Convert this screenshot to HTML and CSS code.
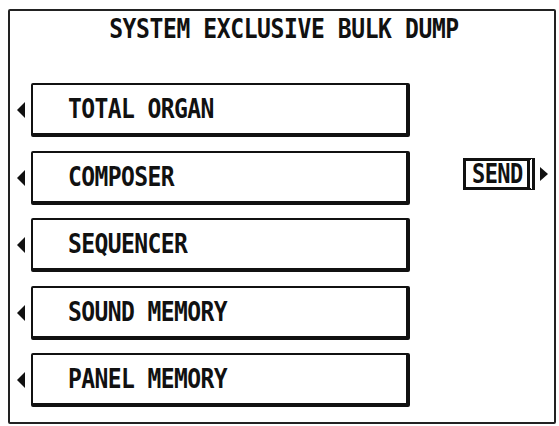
FILE: index.html
```html
<!DOCTYPE html>
<html lang="en">
<head>
  <meta charset="UTF-8" />
  <title>System Exclusive Bulk Dump</title>
  <link rel="stylesheet" href="styles.css">
</head>
<body>
  <div class="screen">
    <h1 class="title"><span class="tall">SYSTEM EXCLUSIVE BULK DUMP</span></h1>

    <div class="main">
      <!-- dump targets -->
      <ul class="items">
        <li class="item"><span class="arrow-left"></span><div class="btn"><span class="tall">TOTAL ORGAN</span></div></li>
        <li class="item"><span class="arrow-left"></span><div class="btn"><span class="tall">COMPOSER</span></div></li>
        <li class="item"><span class="arrow-left"></span><div class="btn"><span class="tall">SEQUENCER</span></div></li>
        <li class="item"><span class="arrow-left"></span><div class="btn"><span class="tall">SOUND MEMORY</span></div></li>
        <li class="item"><span class="arrow-left"></span><div class="btn"><span class="tall">PANEL MEMORY</span></div></li>
      </ul>

      <!-- send -->
      <div class="send-col">
        <div class="send"><span class="tall">SEND</span></div>
        <span class="arrow-right"></span>
      </div>
    </div>
  </div>
</body>
</html>
```

FILE: styles.css
```css
body {
  margin: 0;
  background: #fff;
  color: #111;
  font-family: "DejaVu Sans Mono", monospace;
  font-weight: bold;
}
.screen {
  margin: 9px 3px 0 8px;
  width: 544px;
  height: 411px;
  border: 2px solid #222;
  border-radius: 2px;
}
.tall {
  display: inline-block;
  transform: scaleY(1.18);
}
.title {
  margin: 6px 0 0 0;
  font-size: 23px;
  line-height: 24px;
  font-weight: bold;
  letter-spacing: -0.4px;
  text-align: center;
  padding-left: 4px;
}
.main {
  display: flex;
  margin-top: 42px;
}
.items {
  list-style: none;
  margin: 0;
  padding: 0 0 0 7px;
  display: flex;
  flex-direction: column;
  gap: 13.5px;
}
.item {
  display: flex;
  align-items: center;
  gap: 6px;
}
.arrow-left {
  flex-shrink: 0;
  width: 0;
  height: 0;
  border-top: 8px solid transparent;
  border-bottom: 8px solid transparent;
  border-right: 8px solid #111;
}
.btn {
  width: 338px;
  height: 48px;
  padding-left: 35px;
  border-top: 2px solid #111;
  border-left: 2px solid #111;
  border-right: 4px solid #111;
  border-bottom: 4px solid #111;
  border-radius: 2px;
  display: flex;
  align-items: center;
  font-size: 23px;
  letter-spacing: -0.6px;
}
.send-col {
  display: flex;
  align-items: center;
  gap: 5px;
  margin: 75px 0 0 53px;
  align-self: flex-start;
}
.send {
  box-sizing: border-box;
  height: 32px;
  padding: 0 4px 0 6px;
  border: 3px solid #111;
  border-right: 8px double #111;
  display: flex;
  align-items: center;
  font-size: 22px;
  letter-spacing: -0.6px;
}
.arrow-right {
  flex-shrink: 0;
  width: 0;
  height: 0;
  border-top: 7px solid transparent;
  border-bottom: 7px solid transparent;
  border-left: 8px solid #111;
}
```
